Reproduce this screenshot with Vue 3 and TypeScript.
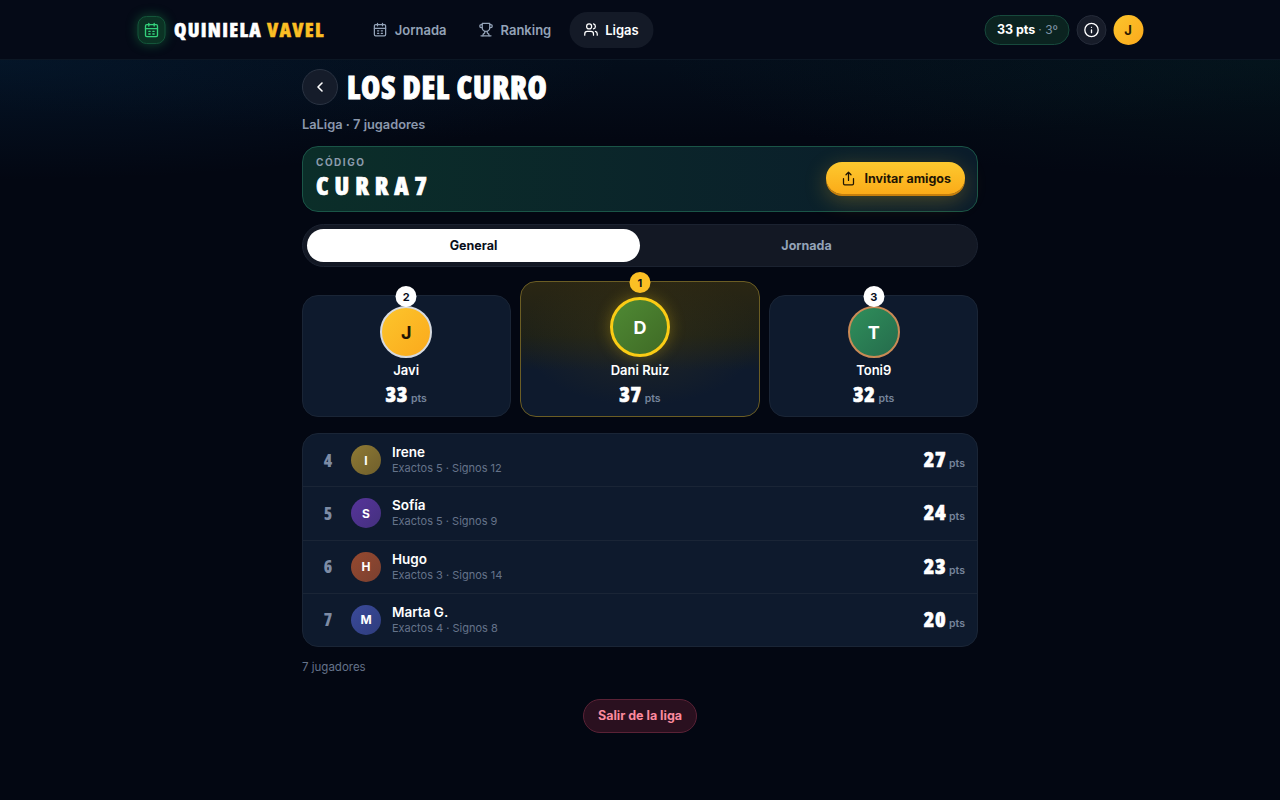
<script setup lang="ts">
interface Row {
  pos: number;
  name: string;
  initial: string;
  detail: string;
  pts: number;
  tone: string;
}

const rows: Row[] = [
  { pos: 4, name: 'Irene', initial: 'I', detail: 'Exactos 5 · Signos 12', pts: 27, tone: 'gold' },
  { pos: 5, name: 'Sofía', initial: 'S', detail: 'Exactos 5 · Signos 9', pts: 24, tone: 'purple' },
  { pos: 6, name: 'Hugo', initial: 'H', detail: 'Exactos 3 · Signos 14', pts: 23, tone: 'rust' },
  { pos: 7, name: 'Marta G.', initial: 'M', detail: 'Exactos 4 · Signos 8', pts: 20, tone: 'indigo' },
];

const podium = [
  { rank: 2, name: 'Javi', initial: 'J', pts: 33, cls: 'second' },
  { rank: 1, name: 'Dani Ruiz', initial: 'D', pts: 37, cls: 'first' },
  { rank: 3, name: 'Toni9', initial: 'T', pts: 32, cls: 'third' },
];
</script>

<template>
  <div class="page">
    <header class="topbar">
      <div class="topbar__inner">
        <div class="brand">
          <span class="brand__icon">
            <svg width="16" height="16" viewBox="0 0 24 24" fill="none" stroke="currentColor" stroke-width="2" stroke-linecap="round" stroke-linejoin="round">
              <path d="M8 2v4M16 2v4" />
              <rect x="3" y="4" width="18" height="18" rx="2" />
              <path d="M3 10h18M8 14h2M14 14h2M8 18h2M14 18h2" />
            </svg>
          </span>
          <span class="brand__name">QUINIELA <em>VAVEL</em></span>
        </div>
        <nav class="nav">
          <a class="nav__item">
            <svg width="15" height="15" viewBox="0 0 24 24" fill="none" stroke="currentColor" stroke-width="2" stroke-linecap="round" stroke-linejoin="round">
              <path d="M8 2v4M16 2v4" />
              <rect x="3" y="4" width="18" height="18" rx="2" />
              <path d="M3 10h18M8 14h2M14 14h2M8 18h2M14 18h2" />
            </svg>
            Jornada
          </a>
          <a class="nav__item">
            <svg width="15" height="15" viewBox="0 0 24 24" fill="none" stroke="currentColor" stroke-width="2" stroke-linecap="round" stroke-linejoin="round">
              <path d="M6 9H4.5a2.5 2.5 0 0 1 0-5H6M18 9h1.5a2.5 2.5 0 0 0 0-5H18M4 22h16" />
              <path d="M10 14.66V17c0 .55-.47.98-.97 1.21C7.85 18.75 7 20.24 7 22M14 14.66V17c0 .55.47.98.97 1.21C16.15 18.75 17 20.24 17 22" />
              <path d="M18 2H6v7a6 6 0 0 0 12 0V2Z" />
            </svg>
            Ranking
          </a>
          <a class="nav__item nav__item--active">
            <svg width="15" height="15" viewBox="0 0 24 24" fill="none" stroke="currentColor" stroke-width="2" stroke-linecap="round" stroke-linejoin="round">
              <path d="M16 21v-2a4 4 0 0 0-4-4H6a4 4 0 0 0-4 4v2" />
              <circle cx="9" cy="7" r="4" />
              <path d="M22 21v-2a4 4 0 0 0-3-3.87M16 3.13a4 4 0 0 1 0 7.75" />
            </svg>
            Ligas
          </a>
        </nav>
        <div class="topbar__right">
          <span class="score"><b>33 pts</b><i>· 3º</i></span>
          <button class="info" type="button" aria-label="Info">
            <svg width="16" height="16" viewBox="0 0 24 24" fill="none" stroke="currentColor" stroke-width="2" stroke-linecap="round" stroke-linejoin="round">
              <circle cx="12" cy="12" r="10" />
              <path d="M12 16v-4M12 8h.01" />
            </svg>
          </button>
          <span class="me">J</span>
        </div>
      </div>
    </header>

    <main class="main">
      <div class="title-row">
        <button class="back" type="button" aria-label="Volver">
          <svg width="16" height="16" viewBox="0 0 24 24" fill="none" stroke="currentColor" stroke-width="2.4" stroke-linecap="round" stroke-linejoin="round">
            <path d="m15 18-6-6 6-6" />
          </svg>
        </button>
        <h1 class="title">LOS DEL CURRO</h1>
      </div>
      <p class="subtitle">LaLiga · 7 jugadores</p>

      <section class="code">
        <div>
          <p class="code__label">CÓDIGO</p>
          <p class="code__value">CURRA7</p>
        </div>
        <button class="invite" type="button">
          <svg width="15" height="15" viewBox="0 0 24 24" fill="none" stroke="currentColor" stroke-width="2" stroke-linecap="round" stroke-linejoin="round">
            <path d="M4 12v8a2 2 0 0 0 2 2h12a2 2 0 0 0 2-2v-8" />
            <path d="m16 6-4-4-4 4M12 2v13" />
          </svg>
          Invitar amigos
        </button>
      </section>

      <div class="tabs">
        <button class="tab tab--active" type="button">General</button>
        <button class="tab" type="button">Jornada</button>
      </div>

      <section class="podium">
        <article v-for="p in podium" :key="p.rank" class="step" :class="'step--' + p.cls">
          <span class="step__avatar-wrap">
            <span class="step__rank">{{ p.rank }}</span>
            <span class="step__avatar">{{ p.initial }}</span>
          </span>
          <span class="step__name">{{ p.name }}</span>
          <span class="step__pts"><b>{{ p.pts }}</b> <small>pts</small></span>
        </article>
      </section>

      <section class="list">
        <div v-for="r in rows" :key="r.pos" class="row">
          <span class="row__pos">{{ r.pos }}</span>
          <span class="row__avatar" :class="'row__avatar--' + r.tone">{{ r.initial }}</span>
          <span class="row__info">
            <span class="row__name">{{ r.name }}</span>
            <span class="row__detail">{{ r.detail }}</span>
          </span>
          <span class="row__pts"><b>{{ r.pts }}</b> <small>pts</small></span>
        </div>
      </section>

      <p class="count">7 jugadores</p>
      <div class="leave-wrap">
        <button class="leave" type="button">Salir de la liga</button>
      </div>
    </main>
  </div>
</template>

<style>
html,
body {
  background: #030712;
}
</style>

<style scoped>
.page {
  min-height: 800px;
  font-family: Inter, "Noto Sans", sans-serif;
  color: #fff;
  background:
    radial-gradient(ellipse 620px 120px at 0 60px, rgba(8, 62, 104, 0.24), transparent 100%),
    radial-gradient(ellipse 620px 120px at 100% 60px, rgba(8, 66, 62, 0.2), transparent 100%),
    radial-gradient(ellipse 800px 80px at 50% 60px, rgba(10, 50, 74, 0.16), transparent 100%),
    #030712;
}

.topbar {
  height: 60px;
  box-sizing: border-box;
  background: #050a17;
  border-bottom: 1px solid #0c1724;
}

.topbar__inner {
  width: 1007px;
  height: 59px;
  margin: 0 auto;
  transform: translateX(-0.5px);
  display: flex;
  align-items: center;
}

.brand {
  display: flex;
  align-items: center;
  gap: 9px;
}

.brand__icon {
  width: 28px;
  height: 28px;
  box-sizing: border-box;
  margin-left: 1px;
  border-radius: 9px;
  display: flex;
  align-items: center;
  justify-content: center;
  color: #34d27b;
  background: #0b3324;
  border: 1px solid #14553a;
  box-shadow: 0 0 12px rgba(34, 197, 94, 0.35);
}

.brand__name {
  font-family: "Open Sans", sans-serif;
  font-stretch: 75%;
  font-size: 20px;
  font-weight: 800;
  letter-spacing: 1.3px;
  -webkit-text-stroke: 0.5px currentColor;
}

.brand__name em {
  font-style: normal;
  color: #fbbf24;
}

.nav {
  display: flex;
  align-items: center;
  gap: 3px;
  margin-left: 34px;
}

.nav__item {
  display: flex;
  align-items: center;
  gap: 7px;
  height: 36px;
  padding: 0 15px 0 14px;
  border-radius: 18px;
  font-size: 13px;
  font-weight: 600;
  color: #94a3b8;
}

.nav__item--active {
  color: #fff;
  background: #141a27;
}

.topbar__right {
  margin-left: auto;
  display: flex;
  align-items: center;
  gap: 7px;
}

.score {
  height: 30px;
  box-sizing: border-box;
  padding: 0 10px 0 11px;
  display: flex;
  align-items: center;
  gap: 3px;
  border-radius: 15px;
  background: #0b2320;
  border: 1px solid #17493c;
  font-size: 12.5px;
}

.score b {
  font-weight: 700;
}

.score i {
  font-style: normal;
  font-size: 12px;
  color: #7f93a8;
}

.info {
  width: 30px;
  height: 30px;
  padding: 0;
  display: flex;
  align-items: center;
  justify-content: center;
  border-radius: 50%;
  color: #fff;
  background: #171c29;
  border: 1px solid #252b39;
}

.me {
  width: 30px;
  height: 30px;
  border-radius: 50%;
  display: flex;
  align-items: center;
  justify-content: center;
  font-size: 13px;
  font-weight: 700;
  color: #2a1a02;
  background: linear-gradient(135deg, #fcc52c, #fba91c);
}

.main {
  width: 676px;
  margin: 0 auto;
}

.title-row {
  display: flex;
  align-items: center;
  gap: 9px;
  padding-top: 9px;
}

.back {
  width: 36px;
  height: 36px;
  padding: 0;
  border-radius: 50%;
  display: flex;
  align-items: center;
  justify-content: center;
  color: #fff;
  background: #151c2a;
  border: 1px solid #2a3342;
}

.title {
  margin: 0;
  font-family: "Open Sans", sans-serif;
  font-stretch: 75%;
  font-size: 31px;
  line-height: 36px;
  font-weight: 800;
  letter-spacing: 0.85px;
  -webkit-text-stroke: 0.9px #fff;
}

.subtitle {
  margin: 11px 0 0;
  font-size: 12.8px;
  line-height: 18px;
  font-weight: 600;
  color: #8b98ad;
}

.code {
  margin-top: 12px;
  height: 66px;
  box-sizing: border-box;
  padding: 0 12px 0 13px;
  display: flex;
  align-items: center;
  justify-content: space-between;
  border-radius: 16px;
  border: 1px solid #1a5547;
  background: linear-gradient(90deg, #0b2e29, #0a1c2b);
}

.code__label {
  margin: 0;
  font-size: 10px;
  line-height: 12px;
  font-weight: 700;
  letter-spacing: 1.5px;
  color: #8b9cad;
}

.code__value {
  margin: 0 0 1px;
  font-family: "Open Sans", sans-serif;
  font-stretch: 75%;
  font-size: 25px;
  line-height: 34px;
  font-weight: 800;
  letter-spacing: 5.9px;
  -webkit-text-stroke: 0.7px #fff;
}

.invite {
  height: 32px;
  margin-bottom: 2px;
  padding: 0 14px 0 15px;
  display: flex;
  align-items: center;
  gap: 8px;
  border: 0;
  border-radius: 16px;
  font-family: inherit;
  font-size: 12.5px;
  font-weight: 700;
  color: #1f1403;
  background: linear-gradient(180deg, #fdc92f, #fbab18);
  box-shadow: 0 2px 0 #c77f0c, 0 6px 22px rgba(251, 191, 36, 0.28);
}

.tabs {
  margin-top: 12px;
  height: 43px;
  box-sizing: border-box;
  padding: 4px;
  display: grid;
  grid-template-columns: 1fr 1fr;
  border-radius: 22px;
  background: #131824;
  border: 1px solid #1b2230;
}

.tab {
  border: 0;
  border-radius: 17px;
  background: transparent;
  font-family: inherit;
  font-size: 12.5px;
  font-weight: 700;
  color: #94a3b8;
}

.tab--active {
  color: #0a0f1c;
  background: #fff;
}

.podium {
  margin-top: 14px;
  display: grid;
  grid-template-columns: 1fr 1.15fr 1fr;
  gap: 9.6px;
  align-items: end;
}

.step {
  height: 122px;
  box-sizing: border-box;
  display: flex;
  flex-direction: column;
  align-items: center;
  border-radius: 16px;
  background: #0e1a2d;
  border: 1px solid #1a2536;
}

.step--first {
  height: 136px;
  border-color: #6b5d24;
  background:
    radial-gradient(ellipse 120px 70px at 50% 40%, rgba(70, 60, 20, 0.35), transparent),
    linear-gradient(180deg, #2a2613 0%, #1e2118 40%, #0e1a2d 66%);
}

.step__avatar-wrap {
  position: relative;
  margin-top: 10px;
  display: block;
}

.step--first .step__avatar-wrap {
  margin-top: 15px;
}

.step__rank {
  position: absolute;
  z-index: 1;
  top: -20px;
  left: 50%;
  transform: translateX(-50%);
  width: 21px;
  height: 21px;
  border-radius: 50%;
  display: flex;
  align-items: center;
  justify-content: center;
  font-size: 11px;
  font-weight: 700;
  color: #0a0f1c;
  background: #fff;
}

.step--first .step__rank {
  top: -25px;
  background: #fbbf24;
}

.step__avatar {
  width: 52px;
  height: 52px;
  box-sizing: border-box;
  border-radius: 50%;
  display: flex;
  align-items: center;
  justify-content: center;
  font-size: 18px;
  font-weight: 700;
}

.step--second .step__avatar {
  color: #1f1403;
  border: 2px solid #d6dae0;
  background: linear-gradient(135deg, #fcc52c, #fba91c);
}

.step--first .step__avatar {
  width: 60px;
  height: 60px;
  border: 3px solid #facc15;
  background: linear-gradient(135deg, #4f8a34, #3f6a25);
  box-shadow: 0 0 16px rgba(250, 204, 21, 0.3);
}

.step--third .step__avatar {
  border: 2.5px solid #c98a55;
  background: linear-gradient(135deg, #2f8f5b, #256b4c);
}

.step__name {
  margin-top: 3px;
  font-size: 13px;
  line-height: 18px;
  font-weight: 600;
}

.step--first .step__name {
  margin-top: 4px;
}

.step__pts,
.row__pts {
  font-size: 10px;
}

.step__pts {
  margin-top: 3px;
  line-height: 24px;
}

.step__pts b,
.row__pts b {
  font-family: "Open Sans", sans-serif;
  font-stretch: 75%;
  font-size: 21.5px;
  font-weight: 800;
  letter-spacing: 0.6px;
  -webkit-text-stroke: 0.6px #fff;
}

.step__pts small,
.row__pts small {
  font-size: 10.5px;
  font-weight: 600;
  color: #75849b;
}

.list {
  margin-top: 16px;
  border-radius: 16px;
  overflow: hidden;
  background: #0e1a2d;
  border: 1px solid #1a2536;
}

.row {
  height: 53.3px;
  box-sizing: border-box;
  padding: 0 12px 0 20px;
  display: flex;
  align-items: center;
  border-bottom: 1px solid #1a2536;
}

.row:last-child {
  height: 52.1px;
  border-bottom: 0;
}

.row__pos {
  width: 10px;
  text-align: center;
  font-family: "Open Sans", sans-serif;
  font-stretch: 75%;
  font-size: 17px;
  font-weight: 800;
  color: #7d8ca5;
}

.row__avatar {
  width: 30px;
  height: 30px;
  margin-left: 18px;
  border-radius: 50%;
  display: flex;
  align-items: center;
  justify-content: center;
  font-size: 12px;
  font-weight: 700;
}

.row__avatar--gold {
  background: linear-gradient(135deg, #8f7a34, #6f5f2c);
}

.row__avatar--purple {
  background: linear-gradient(135deg, #56349a, #44307e);
}

.row__avatar--rust {
  background: linear-gradient(135deg, #96492f, #7a4030);
}

.row__avatar--indigo {
  background: linear-gradient(135deg, #3a4a9a, #2f3d7d);
}

.row__info {
  margin-left: 11px;
  display: flex;
  flex-direction: column;
}

.row__name {
  font-size: 13.5px;
  line-height: 17px;
  font-weight: 600;
}

.row__detail {
  font-size: 11px;
  line-height: 15px;
  color: #65738a;
}

.row__pts {
  margin-left: auto;
  margin-top: -3px;
}

.count {
  margin: 12px 0 0;
  font-size: 11.5px;
  line-height: 16px;
  color: #65738a;
}

.leave-wrap {
  margin-top: 24px;
  display: flex;
  justify-content: center;
}

.leave {
  height: 34px;
  padding: 0 14px;
  border-radius: 17px;
  font-family: inherit;
  font-size: 12.5px;
  font-weight: 700;
  color: #fb8a9e;
  background: #2a101f;
  border: 1px solid #5a2236;
}
</style>
